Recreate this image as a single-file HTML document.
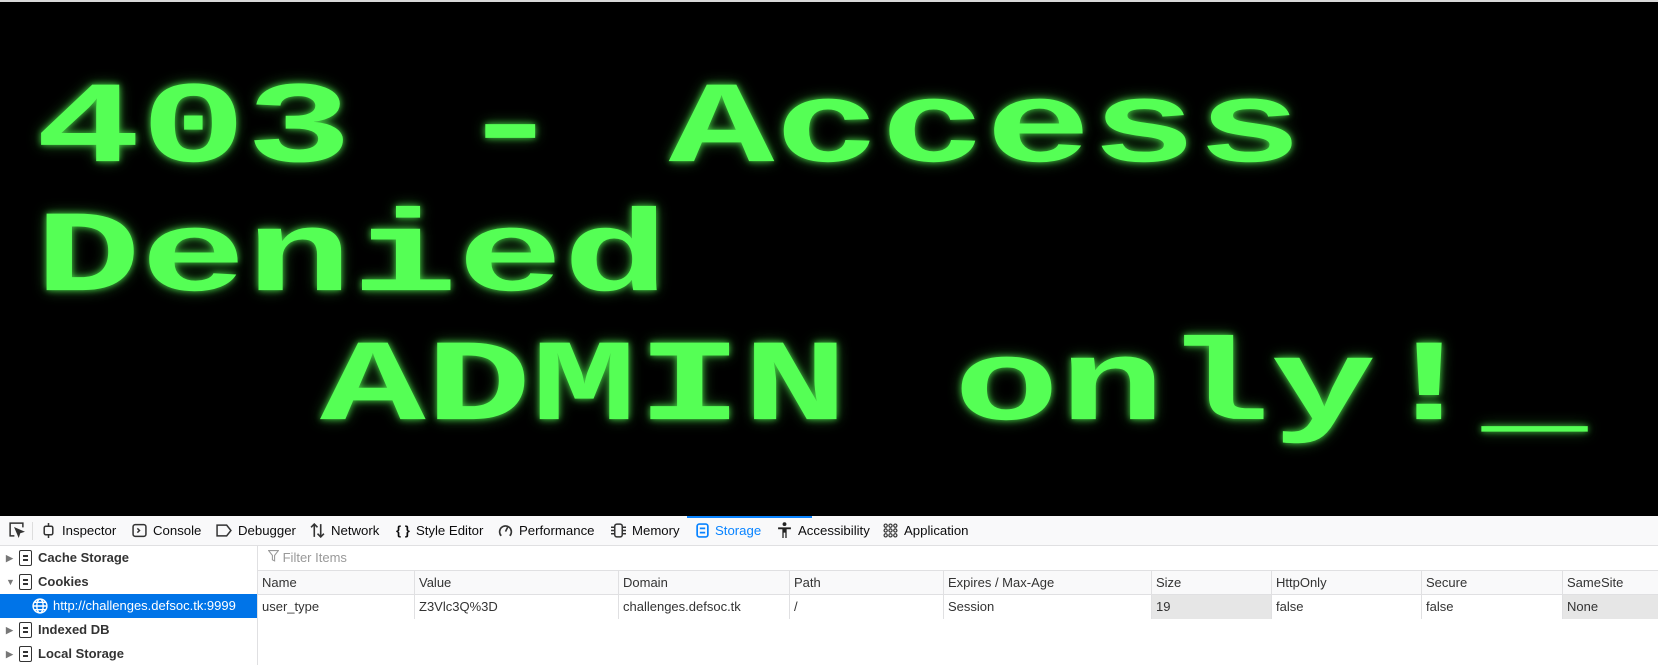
<!DOCTYPE html>
<html><head><meta charset="utf-8"><style>
*{margin:0;padding:0;box-sizing:border-box}
body{width:1658px;height:665px;overflow:hidden;background:#fff;font-family:"Liberation Sans",sans-serif;font-size:13px;color:#0c0c0d;position:relative}
.stage{position:absolute;left:0;top:2px;width:1658px;height:514px;background:#000}
.big{position:absolute;font-family:"Liberation Mono",monospace;font-weight:bold;font-size:176px;line-height:1;color:#55ff55;white-space:pre;text-shadow:0 0 8px rgba(85,255,85,.75),0 0 18px rgba(85,255,85,.4);transform:scaleY(.66);transform-origin:0 0}
.tb{position:absolute;left:0;top:516px;width:1658px;height:30px;background:#f9f9fa;border-bottom:1px solid #e0e0e2}
.tab{position:absolute;top:0;height:29px;line-height:29px;font-size:13.2px;color:#0c0c0d;white-space:nowrap}
.tab svg{vertical-align:-3px;margin-right:6px}
.side{position:absolute;left:0;top:546px;width:258px;height:119px;border-right:1px solid #e0e0e2}
.srow{position:absolute;left:0;width:257px;height:24px;line-height:24px;font-weight:bold;font-size:13px;white-space:nowrap;color:#333}
.srow .ar{position:absolute;left:6px;top:0;font-size:9px;color:#777}
.srow .ic{position:absolute;left:19px;top:4px;width:13px;height:16px;border:1.6px solid #333;border-radius:2px}
.srow .ic:before,.srow .ic:after{content:"";position:absolute;left:2.5px;width:5px;height:1.6px;background:#333}
.srow .ic:before{top:4px}.srow .ic:after{top:8px}
.srow .t{position:absolute;left:38px}
.filter{position:absolute;left:258px;top:546px;width:1400px;height:25px;border-bottom:1px solid #e0e0e2;color:#999;line-height:24px;padding-left:10px;font-size:13px}
.hdr{position:absolute;left:258px;top:571px;width:1400px;height:24px;background:#f9f9fa;border-bottom:1px solid #e0e0e2}
.row{position:absolute;left:258px;top:595px;width:1400px;height:24px}
.c{position:absolute;top:0;height:24px;line-height:24px;padding-left:4px;border-left:1px solid #e0e0e2;white-space:nowrap;font-size:13px;color:#333}
.g{background:#e6e6e6}
</style></head><body>
<div style="position:absolute;left:0;top:0;width:1658px;height:2px;background:#d8d8d8"></div>
<div class="stage"></div>
<div class="big" style="left:35px;top:72px">403 - Access</div>
<div class="big" style="left:35px;top:201px">Denied</div>
<div class="big" style="left:320px;top:330px">ADMIN only!_</div>

<div class="tb">
 <div class="tab" style="left:8px"><svg width="17" height="17" viewBox="0 0 16 16" fill="none" stroke="#333" stroke-width="1.4"><path d="M6 14H2V2h12v4"/><path d="M7 7l7 3-3 1-1 3z" fill="#333"/></svg></div>
 <div style="position:absolute;left:32px;top:6px;width:1px;height:18px;background:#ddd"></div>
 <div class="tab" style="left:41px"><svg width="15" height="15" viewBox="0 0 14 14" fill="none" stroke="#333" stroke-width="1.4"><rect x="3" y="3" width="8" height="8" rx="1.5"/><path d="M7 0v3M7 11v3"/></svg>Inspector</div>
 <div class="tab" style="left:132px"><svg width="15" height="15" viewBox="0 0 14 14" fill="none" stroke="#333" stroke-width="1.4"><rect x="1" y="1.5" width="12" height="11" rx="2"/><path d="M5 5l2 2-2 2"/></svg>Console</div>
 <div class="tab" style="left:216px"><svg width="16" height="15" viewBox="0 0 15 14" fill="none" stroke="#333" stroke-width="1.4"><path d="M1 2h9l4 5-4 5H1z"/></svg>Debugger</div>
 <div class="tab" style="left:310px"><svg width="15" height="15" viewBox="0 0 14 14" fill="none" stroke="#333" stroke-width="1.5"><path d="M4 13V1M1 4l3-3 3 3M10 1v12M7 10l3 3 3-3"/></svg>Network</div>
 <div class="tab" style="left:396px"><span style="font-weight:bold;margin-right:6px">{ }</span>Style Editor</div>
 <div class="tab" style="left:498px"><svg width="15" height="15" viewBox="0 0 14 14" fill="none" stroke="#333" stroke-width="1.5"><path d="M3 12A5.5 5.5 0 1 1 11 12"/><path d="M7 8l2-4"/></svg>Performance</div>
 <div class="tab" style="left:611px"><svg width="15" height="15" viewBox="0 0 14 14" fill="none" stroke="#333" stroke-width="1.4"><rect x="3.5" y="1" width="7" height="12" rx="2"/><path d="M0 4h3M0 7h3M0 10h3M11 4h3M11 7h3M11 10h3"/></svg>Memory</div>
 <div style="position:absolute;left:687px;top:0;width:125px;height:2px;background:#0a84ff"></div>
 <div class="tab" style="left:696px;color:#0a84ff"><svg width="13" height="15" viewBox="0 0 12 14" fill="none" stroke="#0a84ff" stroke-width="1.6"><rect x="1" y="1" width="10" height="12" rx="2"/><path d="M3.5 5h5M3.5 9h5"/></svg>Storage</div>
 <div class="tab" style="left:777px"><svg width="15" height="16" viewBox="0 0 14 15" fill="#222"><circle cx="7" cy="2" r="1.8"/><path d="M1 5h12v1.8H9V15H7.8v-5H6.2v5H5V6.8H1z"/></svg>Accessibility</div>
 <div class="tab" style="left:883px"><svg width="15" height="15" viewBox="0 0 14 14" fill="none" stroke="#333" stroke-width="1.1"><circle cx="2.5" cy="2.5" r="1.5"/><circle cx="7" cy="2.5" r="1.5"/><circle cx="11.5" cy="2.5" r="1.5"/><circle cx="2.5" cy="7" r="1.5"/><circle cx="7" cy="7" r="1.5"/><circle cx="11.5" cy="7" r="1.5"/><circle cx="2.5" cy="11.5" r="1.5"/><circle cx="7" cy="11.5" r="1.5"/><circle cx="11.5" cy="11.5" r="1.5"/></svg>Application</div>
</div>

<div class="side">
 <div class="srow" style="top:0"><span class="ar">▶</span><span class="ic"></span><span class="t">Cache Storage</span></div>
 <div class="srow" style="top:24px"><span class="ar">▼</span><span class="ic"></span><span class="t">Cookies</span></div>
 <div class="srow" style="top:48px;background:#0074e8;color:#fff;font-weight:normal"><svg style="position:absolute;left:32px;top:4px" width="16" height="16" viewBox="0 0 15 15" fill="none" stroke="#fff" stroke-width="1.3"><circle cx="7.5" cy="7.5" r="6.5"/><ellipse cx="7.5" cy="7.5" rx="3" ry="6.5"/><path d="M1 7.5h13M2 4h11M2 11h11"/></svg><span class="t" style="left:53px">http://challenges.defsoc.tk:9999</span></div>
 <div class="srow" style="top:72px"><span class="ar">▶</span><span class="ic"></span><span class="t">Indexed DB</span></div>
 <div class="srow" style="top:96px"><span class="ar">▶</span><span class="ic"></span><span class="t">Local Storage</span></div>
</div>

<div class="filter"><svg width="11" height="12" viewBox="0 0 10 11" fill="none" stroke="#999" stroke-width="1"><path d="M0.5 0.5h9L6 5v5L4 9V5z"/></svg> Filter Items</div>
<div class="hdr">
 <div class="c" style="left:0;border-left:0">Name</div>
 <div class="c" style="left:156px">Value</div>
 <div class="c" style="left:360px">Domain</div>
 <div class="c" style="left:531px">Path</div>
 <div class="c" style="left:685px">Expires / Max-Age</div>
 <div class="c" style="left:893px">Size</div>
 <div class="c" style="left:1013px">HttpOnly</div>
 <div class="c" style="left:1163px">Secure</div>
 <div class="c" style="left:1304px">SameSite</div>
</div>
<div class="row">
 <div class="c" style="left:0;border-left:0;width:156px">user_type</div>
 <div class="c" style="left:156px;width:204px">Z3Vlc3Q%3D</div>
 <div class="c" style="left:360px;width:171px">challenges.defsoc.tk</div>
 <div class="c" style="left:531px;width:154px">/</div>
 <div class="c" style="left:685px;width:208px">Session</div>
 <div class="c g" style="left:893px;width:120px">19</div>
 <div class="c" style="left:1013px;width:150px">false</div>
 <div class="c" style="left:1163px;width:141px">false</div>
 <div class="c g" style="left:1304px;width:96px">None</div>
</div>
</body></html>
